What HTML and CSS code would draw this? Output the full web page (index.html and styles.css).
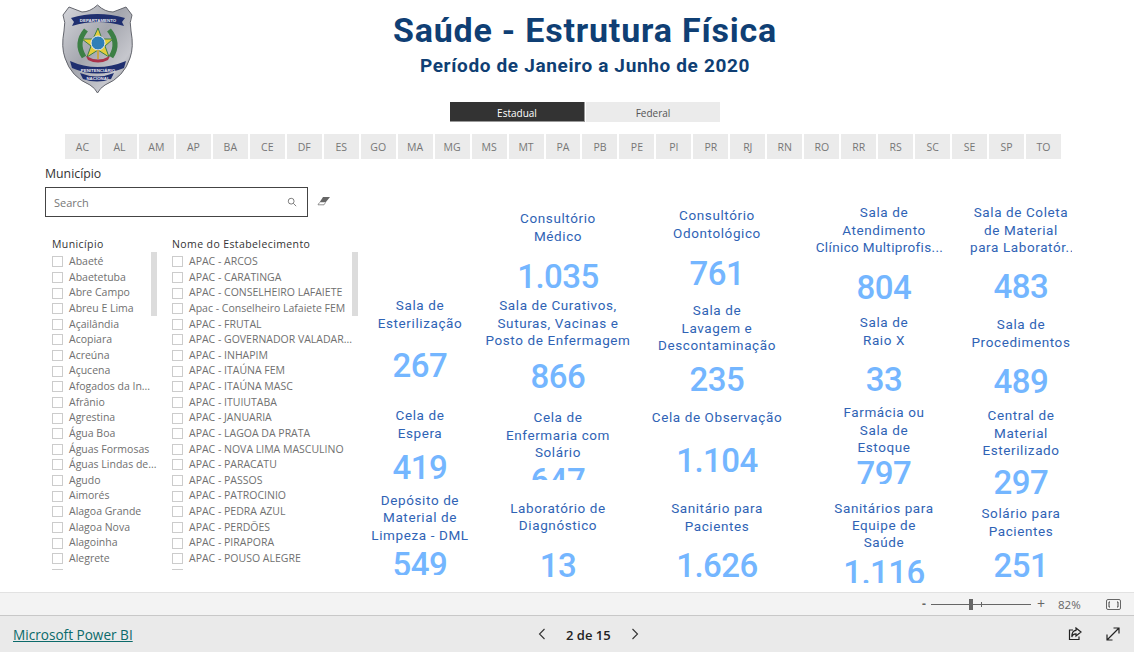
FILE: index.html
```html
<!DOCTYPE html>
<html lang="pt-BR">
<head>
<meta charset="utf-8">
<title>Saúde - Estrutura Física</title>
<link rel="stylesheet" href="styles.css">
</head>
<body>
<div class="page">
  <main class="canvas">
    <header class="head">
      <svg class="logo" viewBox="0 0 75 92" aria-label="Departamento Penitenciário Nacional">
        <defs>
          <linearGradient id="steel" x1="0" y1="0" x2="1" y2="1">
            <stop offset="0" stop-color="#d6d7dc"/>
            <stop offset=".45" stop-color="#a4a6ae"/>
            <stop offset=".75" stop-color="#c6c7cd"/>
            <stop offset="1" stop-color="#7f8189"/>
          </linearGradient>
        </defs>
        <path d="M9 4 L22 9 Q30 9 37.500 2 Q45 9 53 9 L66 4 L72 12 Q69 19 71 28 Q74 44 70 55 Q64 74 45 82 Q40 85 37.500 90 Q35 85 30 82 Q11 74 5 55 Q1 44 4 28 Q6 19 3 12 Z" fill="url(#steel)" stroke="#63656d" stroke-width="1"/>
        <path d="M11 15 Q37 7 65 15 L62 19 L64 23 Q37 15 12 23 L14 19 Z" fill="#1f2f6f"/>
        <text class="logo-t" x="38" y="19" text-anchor="middle">DEPARTAMENTO</text>
        <path d="M10 58 Q37 70 66 58 L64 65 Q37 76 12 65 Z" fill="#1f2f6f"/>
        <path d="M20 70 Q37 77 54 70 L51 76 Q37 81 23 76 Z" fill="#1f2f6f"/>
        <text class="logo-t" x="38" y="68.500" text-anchor="middle">PENITENCIÁRIO</text>
        <text class="logo-t" x="38" y="76.500" text-anchor="middle">NACIONAL</text>
        <path d="M24 54 Q15 40 26 27 M51 54 Q60 40 49 27" fill="none" stroke="#3c7f45" stroke-width="5"/>
        <path d="M38 25 L42 36 L53 36 L45 43 L49 54 L38 47 L27 54 L31 43 L22 36 L33 36 Z" fill="#e3cd3c" stroke="#3c7f45" stroke-width="1"/>
        <circle cx="38" cy="40" r="7" fill="#2f7fb8" stroke="#e9edf2" stroke-width="1"/>
        <rect x="37" y="47" width="2" height="9" fill="#c9a54a"/>
        <path d="M26 53 Q38 60 50 53 L48 57 Q38 62 28 57 Z" fill="#a9324a"/>
      </svg>
      <div class="headline">
        <h1 class="title">Saúde - Estrutura Física</h1>
        <h2 class="subtitle">Período de Janeiro a Junho de 2020</h2>
      </div>
    </header>

    <div class="toggle">
      <button class="toggle-btn is-on">Estadual</button>
      <button class="toggle-btn">Federal</button>
    </div>

    <nav class="states">
      <span class="state">AC</span><span class="state">AL</span><span class="state">AM</span><span class="state">AP</span><span class="state">BA</span><span class="state">CE</span><span class="state">DF</span><span class="state">ES</span><span class="state">GO</span><span class="state">MA</span><span class="state">MG</span><span class="state">MS</span><span class="state">MT</span><span class="state">PA</span><span class="state">PB</span><span class="state">PE</span><span class="state">PI</span><span class="state">PR</span><span class="state">RJ</span><span class="state">RN</span><span class="state">RO</span><span class="state">RR</span><span class="state">RS</span><span class="state">SC</span><span class="state">SE</span><span class="state">SP</span><span class="state">TO</span>
    </nav>

    <section class="body">
      <aside class="filters">
        <div class="filter-label">Município</div>
        <div class="search-row">
          <div class="search">
            <span class="search-text">Search</span>
            <svg class="ico-search" viewBox="0 0 12 12"><circle cx="5" cy="5" r="3.500"/><path d="M7.600 7.600 L11 11"/></svg>
          </div>
          <svg class="ico-eraser" viewBox="0 0 14 10"><path d="M6 1 H13 L8.500 6.500 H2.500 Z" fill="#666"/><path d="M2.500 6.500 L1 8.800 H7 L8.500 6.500" fill="#fff" stroke="#777" stroke-width=".8"/></svg>
        </div>
        <div class="lists">
          <div class="list list-a">
            <div class="list-head">Município</div>
            <span class="scroll"></span>
            <div class="row"><i class="box"></i>Abaeté</div>
            <div class="row"><i class="box"></i>Abaetetuba</div>
            <div class="row"><i class="box"></i>Abre Campo</div>
            <div class="row"><i class="box"></i>Abreu E Lima</div>
            <div class="row"><i class="box"></i>Açailândia</div>
            <div class="row"><i class="box"></i>Acopiara</div>
            <div class="row"><i class="box"></i>Acreúna</div>
            <div class="row"><i class="box"></i>Açucena</div>
            <div class="row"><i class="box"></i>Afogados da In...</div>
            <div class="row"><i class="box"></i>Afrânio</div>
            <div class="row"><i class="box"></i>Agrestina</div>
            <div class="row"><i class="box"></i>Água Boa</div>
            <div class="row"><i class="box"></i>Águas Formosas</div>
            <div class="row"><i class="box"></i>Águas Lindas de...</div>
            <div class="row"><i class="box"></i>Agudo</div>
            <div class="row"><i class="box"></i>Aimorés</div>
            <div class="row"><i class="box"></i>Alagoa Grande</div>
            <div class="row"><i class="box"></i>Alagoa Nova</div>
            <div class="row"><i class="box"></i>Alagoinha</div>
            <div class="row"><i class="box"></i>Alegrete</div>
            <div class="row"><i class="box"></i>Além Paraíba</div>
          </div>
          <div class="list list-b">
            <div class="list-head">Nome do Estabelecimento</div>
            <span class="scroll"></span>
            <div class="row"><i class="box"></i>APAC - ARCOS</div>
            <div class="row"><i class="box"></i>APAC - CARATINGA</div>
            <div class="row"><i class="box"></i>APAC - CONSELHEIRO LAFAIETE</div>
            <div class="row"><i class="box"></i>Apac - Conselheiro Lafaiete FEM</div>
            <div class="row"><i class="box"></i>APAC - FRUTAL</div>
            <div class="row"><i class="box"></i>APAC - GOVERNADOR VALADAR...</div>
            <div class="row"><i class="box"></i>APAC - INHAPIM</div>
            <div class="row"><i class="box"></i>APAC - ITAÚNA FEM</div>
            <div class="row"><i class="box"></i>APAC - ITAÚNA MASC</div>
            <div class="row"><i class="box"></i>APAC - ITUIUTABA</div>
            <div class="row"><i class="box"></i>APAC - JANUARIA</div>
            <div class="row"><i class="box"></i>APAC - LAGOA DA PRATA</div>
            <div class="row"><i class="box"></i>APAC - NOVA LIMA MASCULINO</div>
            <div class="row"><i class="box"></i>APAC - PARACATU</div>
            <div class="row"><i class="box"></i>APAC - PASSOS</div>
            <div class="row"><i class="box"></i>APAC - PATROCINIO</div>
            <div class="row"><i class="box"></i>APAC - PEDRA AZUL</div>
            <div class="row"><i class="box"></i>APAC - PERDÕES</div>
            <div class="row"><i class="box"></i>APAC - PIRAPORA</div>
            <div class="row"><i class="box"></i>APAC - POUSO ALEGRE</div>
            <div class="row"><i class="box"></i></div>
          </div>
        </div>
      </aside>

      <div class="cards">
        <div class="col col-1">
          <article class="card c11"><p class="name">Sala de<br>Esterilização</p><p class="num">267</p></article>
          <article class="card c12"><p class="name">Cela de<br>Espera</p><p class="num">419</p></article>
          <article class="card c13"><p class="name">Depósito de<br>Material de<br>Limpeza - DML</p><p class="num">549</p></article>
        </div>
        <div class="col col-2">
          <article class="card c21"><p class="name">Consultório<br>Médico</p><p class="num">1.035</p></article>
          <article class="card c22"><p class="name">Sala de Curativos,<br>Suturas, Vacinas e<br>Posto de Enfermagem</p><p class="num">866</p></article>
          <article class="card c23"><p class="name">Cela de<br>Enfermaria com<br>Solário</p><p class="num">647</p></article>
          <article class="card c24"><p class="name">Laboratório de<br>Diagnóstico</p><p class="num">13</p></article>
        </div>
        <div class="col col-3">
          <article class="card c31"><p class="name">Consultório<br>Odontológico</p><p class="num">761</p></article>
          <article class="card c32"><p class="name">Sala de<br>Lavagem e<br>Descontaminação</p><p class="num">235</p></article>
          <article class="card c33"><p class="name">Cela de Observação</p><p class="num">1.104</p></article>
          <article class="card c34"><p class="name">Sanitário para<br>Pacientes</p><p class="num">1.626</p></article>
        </div>
        <div class="col col-4">
          <article class="card c41"><p class="name">Sala de<br>Atendimento<br><span class="trunc">Clínico Multiprofis...</span></p><p class="num">804</p></article>
          <article class="card c42"><p class="name">Sala de<br>Raio X</p><p class="num">33</p></article>
          <article class="card c43"><p class="name">Farmácia ou<br>Sala de<br>Estoque</p><p class="num">797</p></article>
          <article class="card c44"><p class="name">Sanitários para<br>Equipe de<br>Saúde</p><p class="num">1.116</p></article>
        </div>
        <div class="col col-5">
          <article class="card c51"><p class="name">Sala de Coleta<br>de Material<br>para Laboratór...</p><p class="num">483</p></article>
          <article class="card c52"><p class="name">Sala de<br>Procedimentos</p><p class="num">489</p></article>
          <article class="card c53"><p class="name">Central de<br>Material<br>Esterilizado</p><p class="num">297</p></article>
          <article class="card c54"><p class="name">Solário para<br>Pacientes</p><p class="num">251</p></article>
        </div>
      </div>
    </section>
  </main>

  <div class="zoombar">
    <span class="zoom-sign">-</span>
    <span class="slider"><i class="tick"></i><i class="thumb"></i></span>
    <span class="zoom-plus">+</span>
    <span class="zoom-val">82%</span>
    <svg class="ico-fit" viewBox="0 0 15 11"><rect x=".5" y=".5" width="14" height="10" rx="1.500" fill="none" stroke="#666"/><path d="M4 3 H3 V8 H4 M11 3 H12 V8 H11" fill="none" stroke="#444"/></svg>
  </div>

  <footer class="footer">
    <a class="brand" href="#">Microsoft Power BI</a>
    <div class="pager">
      <svg class="chev" viewBox="0 0 8 12"><path d="M6.500 1 L1.500 6 L6.500 11"/></svg>
      <span class="page-num">2 de 15</span>
      <svg class="chev" viewBox="0 0 8 12"><path d="M1.500 1 L6.500 6 L1.500 11"/></svg>
    </div>
    <div class="foot-icons">
      <svg class="foot-ico" viewBox="0 0 14 14"><path d="M5 3 H1.500 V12.500 H11 V9.500"/><path d="M8 1 L13 5 L8 9 V6.800 Q4.500 6.800 3.800 10 Q3.800 3.500 8 3.300 Z"/></svg>
      <svg class="foot-ico" viewBox="0 0 14 14"><path d="M1 13 L13 1 M7.500 1 H13 V6.500 M1 7.500 V13 H6.500"/></svg>
    </div>
  </footer>
</div>
</body>
</html>
```

FILE: styles.css
```css
* { box-sizing: border-box; }
html, body { margin: 0; padding: 0; }
body { background: #fff; font-family: "Open Sans", "Liberation Sans", sans-serif; }
.page { width: 1134px; height: 652px; display: flex; flex-direction: column; overflow: hidden; }

.canvas { height: 592px; overflow: hidden; flex: none; }

.head { height: 102px; display: flex; align-items: flex-start; padding: 3px 0 0 60px; }
.logo { width: 75px; height: 92px; flex: none; }
.logo-t { font: 700 4.4px "Liberation Sans", sans-serif; fill: #e8e8ee; }
.headline { width: 630px; margin-left: 135px; text-align: center; color: #0f3f74; font-family: Roboto, sans-serif; }
.title { margin: 5px 0 0; font-size: 34px; line-height: 44px; font-weight: 700; letter-spacing: .8px; }
.subtitle { margin: 1px 0 0; font-size: 19px; line-height: 26px; font-weight: 700; letter-spacing: .65px; }

.toggle { display: flex; gap: 1px; padding-left: 450px; height: 20px; }
.toggle-btn { width: 135px; height: 20px; border: 0; padding: 2px 0 0; font: 10px "Open Sans", sans-serif; background: #ebebeb; color: #555; }
.toggle-btn + .toggle-btn { width: 134px; }
.toggle-btn.is-on { background: #333; color: #fff; border: 1px solid #999; border-width: 0 1px 1px 0; }

.states { display: grid; grid-template-columns: repeat(27, 1fr); gap: 2px; margin: 12px 0 0 65px; width: 996px; height: 25px; }
.state { background: #ebebeb; color: #777; font-size: 10.5px; display: flex; align-items: center; justify-content: center; }

.body { display: flex; height: 427px; margin-top: 6px; }

.filters { width: 360px; padding-left: 45px; flex: none; }
.filter-label { font-size: 12.3px; line-height: 18px; height: 18px; color: #333; }
.search-row { display: flex; align-items: flex-start; margin-top: 4px; gap: 9px; }
.search { width: 263px; height: 30px; border: 1px solid #444; display: flex; align-items: center; justify-content: space-between; padding: 0 10px 0 8px; }
.search-text { font-size: 11px; color: #777; }
.ico-search { width: 10px; height: 10px; fill: none; stroke: #666; stroke-width: 1; }
.ico-eraser { width: 14px; height: 10px; margin-top: 9px; }

.lists { display: flex; margin-top: 19px; padding-left: 7px; height: 334px; overflow: hidden; }
.list { position: relative; width: 120px; flex: none; }
.list-b { width: 190px; }
.list-head { height: 18px; font-size: 10.5px; line-height: 16px; color: #333; letter-spacing: .4px; }
.row { height: 15.63px; display: flex; align-items: center; gap: 6px; font-size: 10.5px; line-height: 15.63px; color: #707070; white-space: nowrap; }
.box { width: 11px; height: 11px; flex: none; border: 1px solid #ccc; background: #fff; }
.scroll { position: absolute; top: 16px; left: 99px; width: 6px; height: 64px; background: #dcdcdc; }
.list-b .scroll { left: 180px; }

.cards { display: grid; grid-template-columns: 120px 156px 162px 172px 102px; margin-top: 1px; font-family: Roboto, sans-serif; text-align: center; }
.col { display: flex; flex-direction: column; }
.card { overflow: hidden; flex: none; }
.name { margin: 0 0 .5px; font-size: 13.5px; line-height: 17.2px; color: #2f63b5; letter-spacing: .6px; white-space: nowrap; }
.trunc { display: inline-block; margin-right: 9px; letter-spacing: .35px; }
.num { margin: 0; font-size: 33px; line-height: 40px; color: #74b6ff; letter-spacing: -.5px; font-weight: 500; }

.c11 { margin-top: 131.3px; height: 90px; } .c11 .num { margin-top: 14.3px; }
.c12 { margin-top: 20px; height: 74.7px; } .c12 .num { margin-top: 6.3px; }
.c13 { margin-top: 10.3px; height: 82.7px; } .c13 .num { margin-top: 1.3px; }

.c21 { margin-top: 44.3px; height: 85px; } .c21 .num { margin-top: 12.3px; }
.c22 { margin-top: 2px; height: 100px; } .c22 .num { margin-top: 8.3px; }
.c23 { margin-top: 12px; height: 70.7px; } .c23 .num { margin-top: 0; }
.c24 { margin-top: 20.3px; height: 90px; } .c24 .num { margin-top: 11.3px; }

.c31 { margin-top: 41.3px; height: 85px; } .c31 .num { margin-top: 12.3px; }
.c32 { margin-top: 10px; height: 100px; } .c32 .num { margin-top: 6.3px; }
.c33 { margin-top: 7px; height: 80px; } .c33 .num { margin-top: 14.3px; }
.c34 { margin-top: 11px; height: 90px; } .c34 .num { margin-top: 11.3px; }

.c41 { margin-top: 38.3px; height: 100px; } .c41 .num { margin-top: 12.3px; }
.c42 { margin-top: 10px; height: 85px; } .c42 .num { margin-top: 11.3px; }
.c43 { margin-top: 5px; height: 79.7px; } .c43 .num { margin-top: -2.7px; }
.c44 { margin-top: 16px; height: 82.7px; } .c44 .num { margin-top: 1.3px; }

.c51 { margin-top: 38.3px; height: 100px; } .c51 .num { margin-top: 11.3px; }
.c52 { margin-top: 12px; height: 85px; } .c52 .num { margin-top: 11.3px; }
.c53 { margin-top: 6px; height: 95px; } .c53 .num { margin-top: 4.3px; }
.c54 { margin-top: 3px; height: 85px; } .c54 .num { margin-top: 6.3px; }

.zoombar { height: 23px; flex: none; background: #f3f3f3; border-top: 1px solid #e2e2e2; display: flex; align-items: center; padding-left: 922px; color: #666; font-size: 12px; }
.zoom-sign { width: 8px; font-weight: 700; line-height: 1; }
.slider { position: relative; width: 100px; height: 1px; background: #666; margin-left: 1px; }
.thumb { position: absolute; left: 38px; top: -5px; width: 4px; height: 11px; background: #666; }
.tick { position: absolute; left: 50px; top: -2px; width: 1px; height: 5px; background: #666; }
.zoom-plus { margin-left: 6px; font-size: 14px; line-height: 1; }
.zoom-val { margin-left: 13px; font-size: 11.5px; }
.ico-fit { width: 15px; height: 11px; margin-left: 25px; }

.footer { flex: 1; background: #eaeaea; border-top: 1px solid #c8c8c8; display: flex; align-items: center; padding: 0 14px 0 13px; }
.brand { font-size: 13.6px; color: #0b6a6a; text-decoration: underline; width: 525px; font-family: "Open Sans", sans-serif; }
.pager { display: flex; align-items: center; width: 108px; }
.chev { width: 8px; height: 12px; fill: none; stroke: #333; stroke-width: 1.100; }
.page-num { font-size: 13px; line-height: 20px; padding-top: 2px; font-weight: 600; color: #222; margin: 0 20px 0 20px; white-space: nowrap; }
.foot-icons { margin-left: auto; display: flex; gap: 24px; }
.foot-ico { width: 14px; height: 14px; fill: none; stroke: #222; stroke-width: 1.200; }
```
